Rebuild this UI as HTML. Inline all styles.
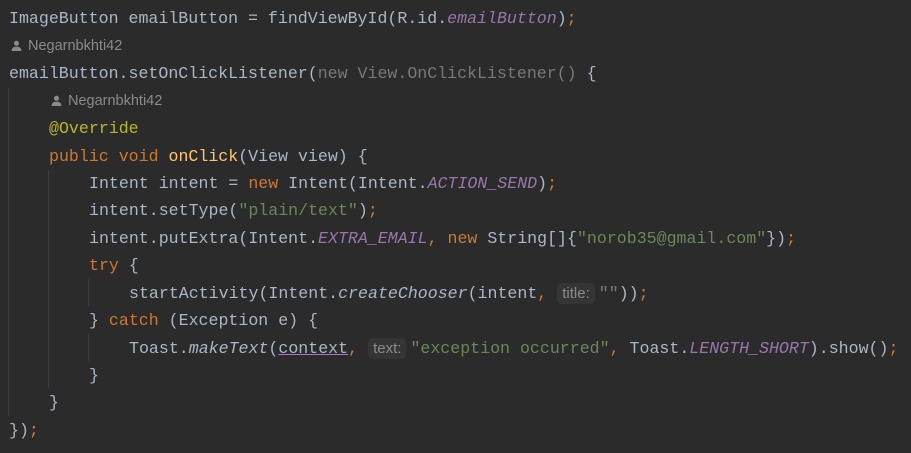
<!DOCTYPE html><html><head><style>
body{margin:0;width:911px;height:453px;background:#2b2b2b;overflow:hidden;position:relative}
.l{position:absolute;left:9px;height:27px;line-height:27px;white-space:pre;font-family:"Liberation Mono",monospace;font-size:16.6px;color:#a9b7c6}
.a{font-family:"Liberation Sans",sans-serif;font-size:14.5px;color:#8a8a8a}
.k{color:#cc7832}.m{color:#ffc66d}.s{color:#6a8759}.i{color:#9876aa;font-style:italic}.f{font-style:italic}.an{color:#bbb529}.g{color:#787878}
.h{display:inline-block;line-height:21px;font-family:"Liberation Sans",sans-serif;font-size:15px;color:#8a8a8a;background:#353535;border-radius:5px;padding:0 5px;margin:0 4px 0 10px}
.u{text-decoration:underline;color:#a9b7c6;text-decoration-color:#b070d0}
.v{position:absolute;width:1px;background:#3c3c3c}
.p{display:inline-block;width:11px;height:11px;vertical-align:-1px;margin-right:6px}
</style></head><body>
<div class="v" style="left:8px;top:88px;height:328px"></div>
<div class="v" style="left:48px;top:170px;height:218px"></div>
<div class="v" style="left:88px;top:279px;height:27px"></div>
<div class="v" style="left:88px;top:334px;height:27px"></div>
<div class="l" style="top:5px">ImageButton emailButton = findViewById(R.id.<span class="i">emailButton</span>)<span class="k">;</span></div>
<div class="l a" style="top:33px;left:11px"><svg class="p" viewBox="0 0 10 10"><circle cx="5" cy="3" r="2.3" fill="#8a8a8a"/><path d="M0.5 10 Q0.5 6 5 6 Q9.5 6 9.5 10Z" fill="#8a8a8a"/></svg>Negarnbkhti42</div>
<div class="l" style="top:60px">emailButton.setOnClickListener(<span class="g">new View.OnClickListener()</span> {</div>
<div class="l a" style="top:88px;left:51px"><svg class="p" viewBox="0 0 10 10"><circle cx="5" cy="3" r="2.3" fill="#8a8a8a"/><path d="M0.5 10 Q0.5 6 5 6 Q9.5 6 9.5 10Z" fill="#8a8a8a"/></svg>Negarnbkhti42</div>
<div class="l an" style="top:115px;left:49px">@Override</div>
<div class="l" style="top:143px;left:49px"><span class="k">public void </span><span class="m">onClick</span>(View view) {</div>
<div class="l" style="top:170px;left:89px">Intent intent = <span class="k">new </span>Intent(Intent.<span class="i">ACTION_SEND</span>)<span class="k">;</span></div>
<div class="l" style="top:197px;left:89px">intent.setType(<span class="s">"plain/text"</span>)<span class="k">;</span></div>
<div class="l" style="top:225px;left:89px">intent.putExtra(Intent.<span class="i">EXTRA_EMAIL</span><span class="k">, new </span>String[]{<span class="s">"norob35@gmail.com"</span>})<span class="k">;</span></div>
<div class="l" style="top:252px;left:89px"><span class="k">try </span>{</div>
<div class="l" style="top:280px;left:129px">startActivity(Intent.<span class="f">createChooser</span>(intent<span class="k">,</span><span class="h">title:</span><span class="s">""</span>))<span class="k">;</span></div>
<div class="l" style="top:307px;left:89px">} <span class="k">catch </span>(Exception e) {</div>
<div class="l" style="top:335px;left:129px">Toast.<span class="f">makeText</span>(<span class="u">context</span><span class="k">,</span><span class="h">text:</span><span class="s">"exception occurred"</span><span class="k">, </span>Toast.<span class="i">LENGTH_SHORT</span>).show()<span class="k">;</span></div>
<div class="l" style="top:362px;left:89px">}</div>
<div class="l" style="top:389px;left:49px">}</div>
<div class="l" style="top:417px">})<span class="k">;</span></div>
</body></html>
